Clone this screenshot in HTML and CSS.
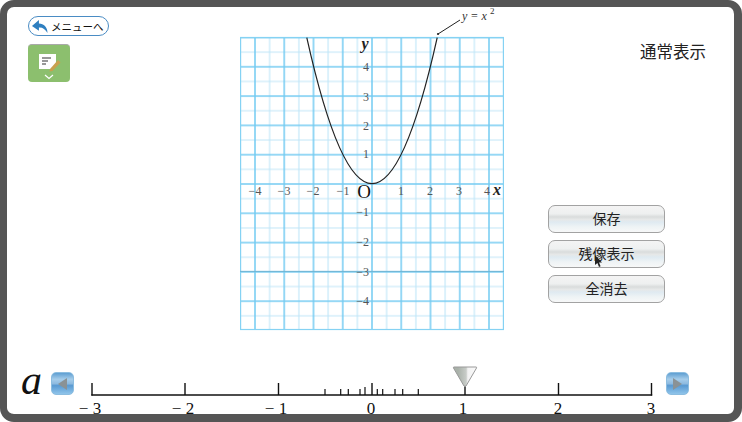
FILE: index.html
```html
<!DOCTYPE html>
<html lang="ja">
<head>
    <meta charset="UTF-8">
    <title>通常表示</title>
    <link rel="stylesheet" href="styles.css">
</head>
<body>
    <div class="frame">
        <div class="main">
            <div class="left-col">
                <button class="menu-btn">
                    <svg class="back-icon" width="18" height="15" viewBox="0 0 16 14"><path d="M7 1 L0.5 6.5 L7 11 L7 8 C10 7.6 13 9.5 15 13 C15 7.5 11.5 4.4 7 4.2 Z" fill="#2f7fc0"/></svg>
                    メニューへ
                </button>
                <div class="note-btn">
                    <svg width="24" height="20" viewBox="0 0 24 20">
                        <path d="M2 1 H19 V11 L14 16 H2 Z" fill="#fff"/>
                        <path d="M5 5 H14 M5 8 H11 M5 11 H9" stroke="#777" stroke-width="1.3"/>
                        <path d="M13 16 L21 7 L23.5 9.5 L15.5 18 L12.5 18.5 Z" fill="#c9a04e"/>
                    </svg>
                    <svg width="10" height="6" viewBox="0 0 10 6"><path d="M1 1 L5 4.5 L9 1" fill="none" stroke="#fff" stroke-width="1.2"/></svg>
                </div>
            </div>

            <svg class="graph" width="264" height="324" viewBox="240 7 264 324">
                <defs>
                    <pattern id="grid" patternUnits="userSpaceOnUse" x="357.375" y="169.35" width="29.25" height="29.3">
                        <path d="M0 0 V29.3 M29.25 0 V29.3 M0 0 H29.25 M0 29.3 H29.25" stroke="#bfe6f8" stroke-width="1.1"/>
                        <path d="M14.625 0 V29.3 M0 14.65 H29.25" stroke="#74cbf2" stroke-width="1.5"/>
                    </pattern>
                </defs>
                <rect x="240.5" y="37.5" width="263" height="292" fill="url(#grid)" stroke="#85d2f3" stroke-width="1.2"/>
                <line x1="240" y1="271.4" x2="504" y2="271.4" stroke="#6fb4d4" stroke-width="1"/>
                <path d="M306.8 37.7 Q372 329.7 437.2 37.7" fill="none" stroke="#222" stroke-width="1.2"/>
                <path d="M438 34 L460 20" stroke="#222" stroke-width="1"/>
                <circle cx="438" cy="34" r="1.1" fill="#222"/>
                <text class="formula" x="462" y="20">y = x</text>
                <text class="formula-sup" x="490" y="14">2</text>

                <text class="axis-name" x="365" y="49" text-anchor="middle">y</text>
                <text class="axis-name" x="497" y="195" text-anchor="middle">x</text>
                <text class="origin" x="364" y="198" text-anchor="middle">O</text>

                <g class="num" text-anchor="middle">
                    <text x="255" y="195">−4</text>
                    <text x="284" y="195">−3</text>
                    <text x="313" y="195">−2</text>
                    <text x="343" y="195">−1</text>
                    <text x="401" y="195">1</text>
                    <text x="430" y="195">2</text>
                    <text x="459" y="195">3</text>
                    <text x="487" y="195">4</text>
                </g>
                <g class="num" text-anchor="end">
                    <text x="369" y="71">4</text>
                    <text x="369" y="101">3</text>
                    <text x="369" y="130">2</text>
                    <text x="369" y="158">1</text>
                    <text x="369" y="216">−1</text>
                    <text x="369" y="246">−2</text>
                    <text x="369" y="276">−3</text>
                    <text x="369" y="305">−4</text>
                </g>
            </svg>

            <div class="right-col">
                <div class="mode-label">通常表示</div>
                <div class="btn-list">
                    <button class="action-btn">保存</button>
                    <button class="action-btn">残像表示</button>
                    <button class="action-btn">全消去</button>
                </div>
            </div>
        </div>

        <div class="scale-row">
            <div class="param">a</div>
            <div class="step-btn"><span class="tri-left"></span></div>
            <svg class="scale" width="591" height="60" viewBox="75 360 591 60">
                <path d="M92 383 V395.5 M185 383 V395 M278.5 383 V395 M372 383 V395 M465 383 V395 M558.5 383 V395 M651.5 383 V395.5" stroke="#111" stroke-width="1.4" fill="none"/>
                <path d="M325 389 V395 M340.7 389 V395 M348.3 389 V395 M360 389 V395 M365 387 V395 M377.3 389 V395 M382.7 389 V395 M395 389 V395 M402.7 389 V395 M418.3 389 V395" stroke="#111" stroke-width="1.2" fill="none"/>
                <line x1="91.3" y1="395" x2="652.2" y2="395" stroke="#111" stroke-width="1.6"/>
                <g class="scale-num" text-anchor="middle">
                    <text x="90" y="414">− 3</text>
                    <text x="183" y="414">− 2</text>
                    <text x="276" y="414">− 1</text>
                    <text x="371" y="414">0</text>
                    <text x="463" y="414">1</text>
                    <text x="558" y="414">2</text>
                    <text x="651" y="414">3</text>
                </g>
                <defs>
                    <linearGradient id="knob" x1="0" y1="0" x2="1" y2="0">
                        <stop offset="0.2" stop-color="#a9b1a9"/>
                        <stop offset="0.55" stop-color="#c8ccc8"/>
                        <stop offset="0.62" stop-color="#f2f2f2"/>
                        <stop offset="1" stop-color="#fafafa"/>
                    </linearGradient>
                </defs>
                <path d="M454 367 H476 Q477 367 476.5 368 L466 386 Q465 387 464 386 L453.5 368 Q453 367 454 367 Z" fill="url(#knob)" stroke="#999" stroke-width="1"/>
            </svg>
            <div class="step-btn"><span class="tri-right"></span></div>
        </div>

        <svg class="cursor" width="9" height="13" viewBox="0 0 9 13"><path d="M1 0 L1 10 L3.4 8 L5 12 L6.6 11.2 L5 7.6 L8 7.4 Z" fill="#222"/></svg>
    </div>
</body>
</html>
```

FILE: styles.css
```css
html, body {
    margin: 0;
    height: 100%;
    background: #fff;
}
.frame {
    position: relative;
    box-sizing: border-box;
    width: 742px;
    height: 422px;
    border: solid #555;
    border-width: 7px 8px 8px 7px;
    border-radius: 14px;
    display: flex;
    flex-direction: column;
    font-family: "Noto Sans CJK JP", "Noto Sans", sans-serif;
    color: #222;
}
.main {
    flex: none;
    display: flex;
    height: 353px;
}
.left-col {
    box-sizing: border-box;
    width: 233px;
    padding: 9px 0 0 21px;
}
.menu-btn {
    display: flex;
    align-items: center;
    gap: 2px;
    box-sizing: border-box;
    width: 81px;
    height: 20px;
    padding: 0 0 0 2px;
    border: 1px solid #4a8cc4;
    border-radius: 10px;
    background: #fff;
    font-family: inherit;
    font-size: 10.5px;
    color: #111;
    white-space: nowrap;
}
.back-icon {
    flex: none;
}
.note-btn {
    box-sizing: border-box;
    width: 42px;
    height: 38px;
    margin-top: 8px;
    padding-top: 8px;
    border-radius: 4px;
    border-top: 1px solid #a9a9a9;
    background: #8cbf6e;
    display: flex;
    flex-direction: column;
    align-items: center;
    gap: 1px;
}
.graph {
    flex: none;
    display: block;
    margin: 0;
}
.graph text {
    font-family: "Liberation Serif", serif;
}
.formula {
    font-size: 12px;
    font-style: italic;
    fill: #333;
}
.formula-sup {
    font-size: 9px;
    fill: #333;
}
.axis-name {
    font-size: 16px;
    font-style: italic;
    font-weight: bold;
    fill: #222;
}
.origin {
    font-size: 19px;
    fill: #111;
}
.num {
    font-size: 12px;
    fill: #555;
}
.right-col {
    flex: 1;
    display: flex;
    flex-direction: column;
    align-items: flex-end;
    padding-right: 28px;
}
.mode-label {
    margin-top: 34px;
    font-size: 16.5px;
    line-height: 20px;
    color: #222;
}
.btn-list {
    display: flex;
    flex-direction: column;
    gap: 7px;
    margin-top: 144px;
    margin-right: 41px;
}
.action-btn {
    box-sizing: border-box;
    width: 117px;
    height: 28px;
    padding: 0 0 3px;
    border: 1px solid #a2a2a2;
    border-radius: 7px;
    background: linear-gradient(#f4f4f4 0%, #eef0f0 30%, #d9dcdc 42%, #e6e8e8 52%, #dfeaf1 62%, #eef3f5 80%, #f7f8f8 100%);
    font-family: inherit;
    font-size: 14px;
    color: #222;
}
.scale-row {
    flex: none;
    height: 47px;
    display: flex;
    align-items: flex-start;
}
.param {
    width: 44px;
    padding-left: 14px;
    box-sizing: border-box;
    font-family: "Liberation Serif", serif;
    font-style: italic;
    font-size: 42px;
    line-height: 40px;
    color: #111;
}
.step-btn {
    flex: none;
    width: 23px;
    height: 23px;
    margin-top: 12px;
    border-radius: 5px;
    border: 1px solid #8cbde0;
    box-sizing: border-box;
    background: linear-gradient(#5f9fd2 0%, #a6cdea 30%, #8fbbe0 50%, #5a9ad2 60%, #8fc4ea 100%);
    display: flex;
    align-items: center;
    justify-content: center;
}
.tri-left, .tri-right {
    width: 0;
    height: 0;
    border-top: 6px solid transparent;
    border-bottom: 6px solid transparent;
}
.tri-left {
    border-right: 9px solid #8a9296;
}
.tri-right {
    border-left: 9px solid #8a9296;
}
.scale {
    flex: none;
    display: block;
    margin-left: 1px;
}
.scale-num {
    font-family: "Liberation Serif", serif;
    font-size: 17px;
    fill: #111;
}
.cursor {
    position: absolute;
    left: 587px;
    top: 248px;
}
```
